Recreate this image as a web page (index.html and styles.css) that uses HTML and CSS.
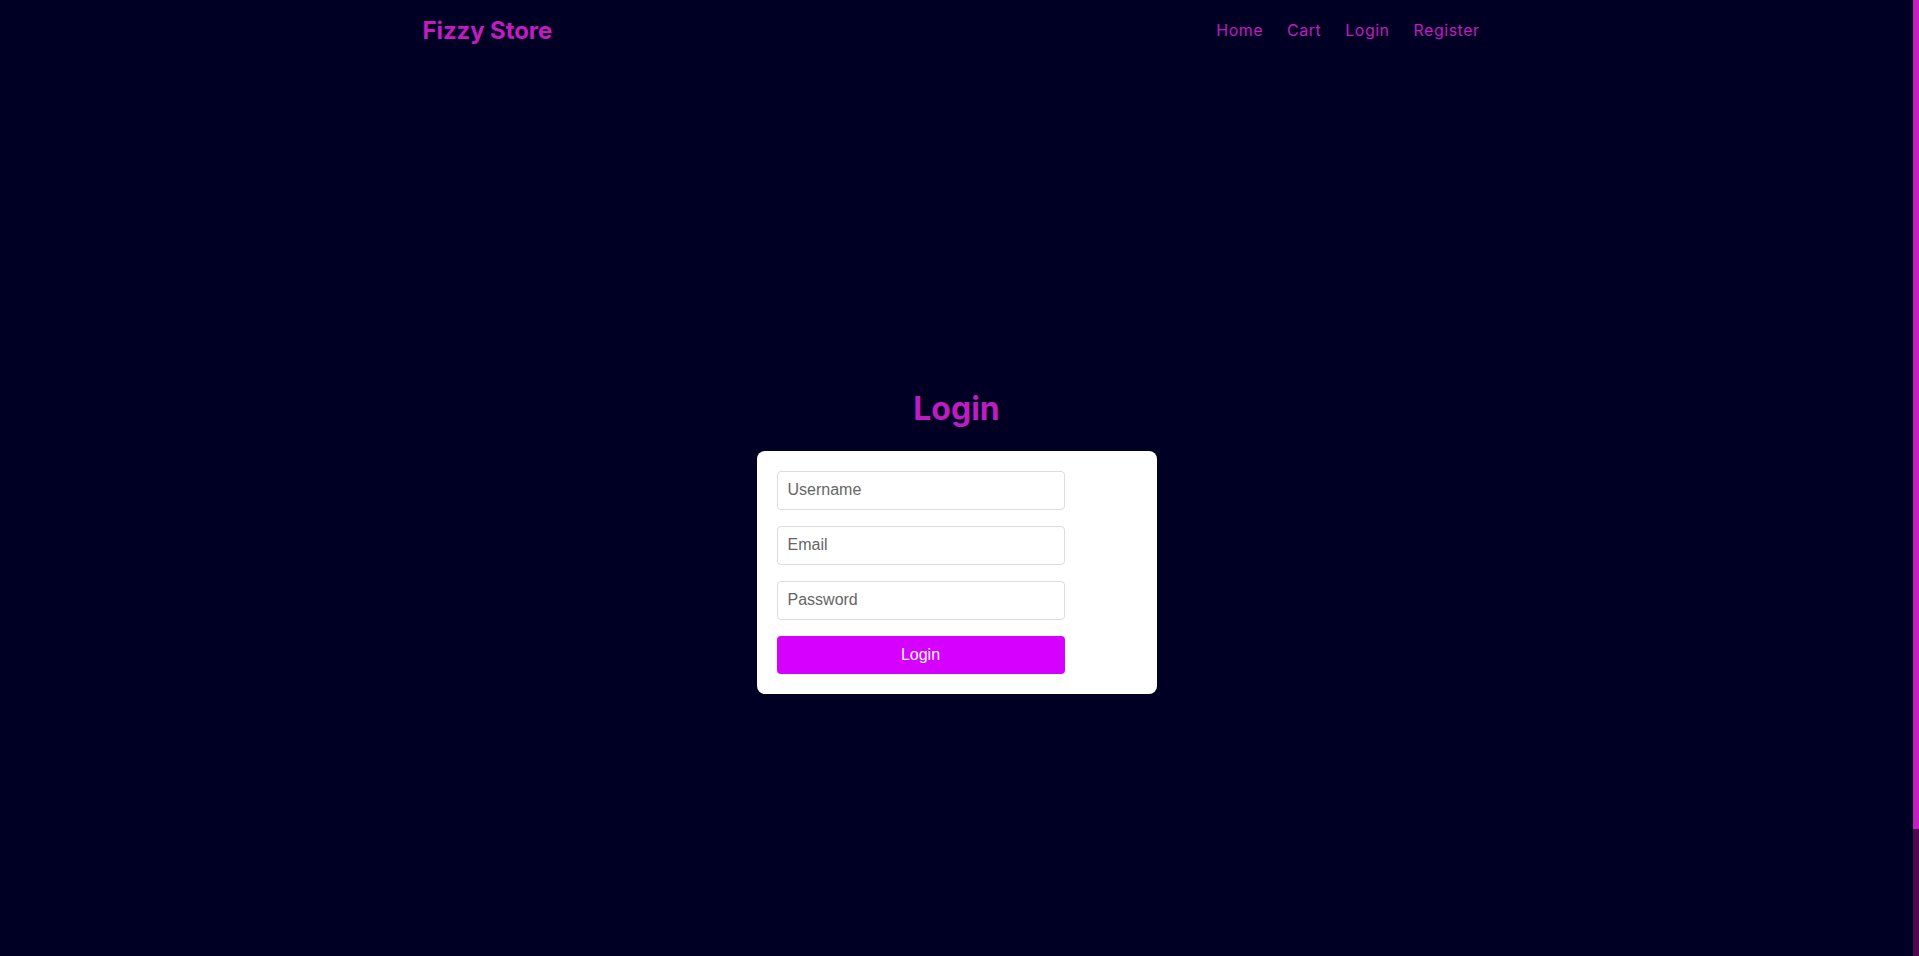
FILE: index.html
```html
<!DOCTYPE html>
<html lang="en">
<head>
<meta charset="utf-8">
<title>Fizzy Store - Login</title>
<link rel="stylesheet" href="styles.css">
</head>
<body>
<header class="site-header">
  <div class="container header-inner">
    <a class="brand" href="#">Fizzy Store</a>
    <nav class="nav">
      <a href="#">Home</a>
      <a href="#">Cart</a>
      <a href="#">Login</a>
      <a href="#">Register</a>
    </nav>
  </div>
</header>
<main class="main">
  <h2 class="title">Login</h2>
  <form class="card">
    <input class="field" type="text" placeholder="Username">
    <input class="field" type="email" placeholder="Email">
    <input class="field" type="password" placeholder="Password">
    <button class="btn" type="button">Login</button>
  </form>
</main>
<footer class="footer"></footer>
<div class="scrollbar"><div class="scrollbar-thumb"></div></div>
</body>
</html>
```

FILE: styles.css
```css
html::-webkit-scrollbar { width: 0; height: 0; }

* { box-sizing: border-box; }

body {
  margin: 0 6px 0 0;
  background: #000025;
  font-family: Inter, "Open Sans", sans-serif;
  color: #c21cbf;
}

.container {
  width: 1100px;
  margin: 0 auto;
  padding: 0 27px 0 16px;
}

.site-header { height: 60px; }

.header-inner {
  height: 60px;
  display: flex;
  align-items: center;
  justify-content: space-between;
}

.brand {
  color: #c21cbf;
  text-decoration: none;
  font-weight: 700;
  font-size: 24px;
  letter-spacing: -0.1px;
}

.nav { display: flex; gap: 24px; }

.nav a {
  color: #c21cbf;
  text-decoration: none;
  font-size: 16px;
  letter-spacing: 0.5px;
}

.main {
  min-height: 100vh;
  padding-top: 6px;
  display: flex;
  flex-direction: column;
  align-items: center;
  justify-content: center;
}

.title {
  margin: 0 0 22px;
  font-size: 32px;
  line-height: 40px;
  font-weight: 700;
  color: #bd1cbf;
}

.card {
  width: 400px;
  background: #fff;
  border-radius: 8px;
  padding: 20px;
  display: flex;
  flex-direction: column;
  gap: 16px;
}

.field {
  width: 80%;
  height: 39px;
  padding: 0 10px;
  border: 1px solid #dcdcdc;
  border-radius: 4px;
  font-family: "Liberation Sans", Arial, sans-serif;
  font-size: 16px;
  color: #333;
}

.field::placeholder { color: #666; }

.btn {
  width: 80%;
  height: 38px;
  border: none;
  border-radius: 4px;
  background: #d500ff;
  color: #fff;
  font-family: "Liberation Sans", Arial, sans-serif;
  font-size: 16px;
}

.footer { height: 86px; }

.scrollbar {
  position: fixed;
  top: 0;
  right: 0;
  width: 6px;
  height: 100vh;
  background: #4f0a4f;
}

.scrollbar-thumb {
  height: 829px;
  background: #c71ec4;
}
```
